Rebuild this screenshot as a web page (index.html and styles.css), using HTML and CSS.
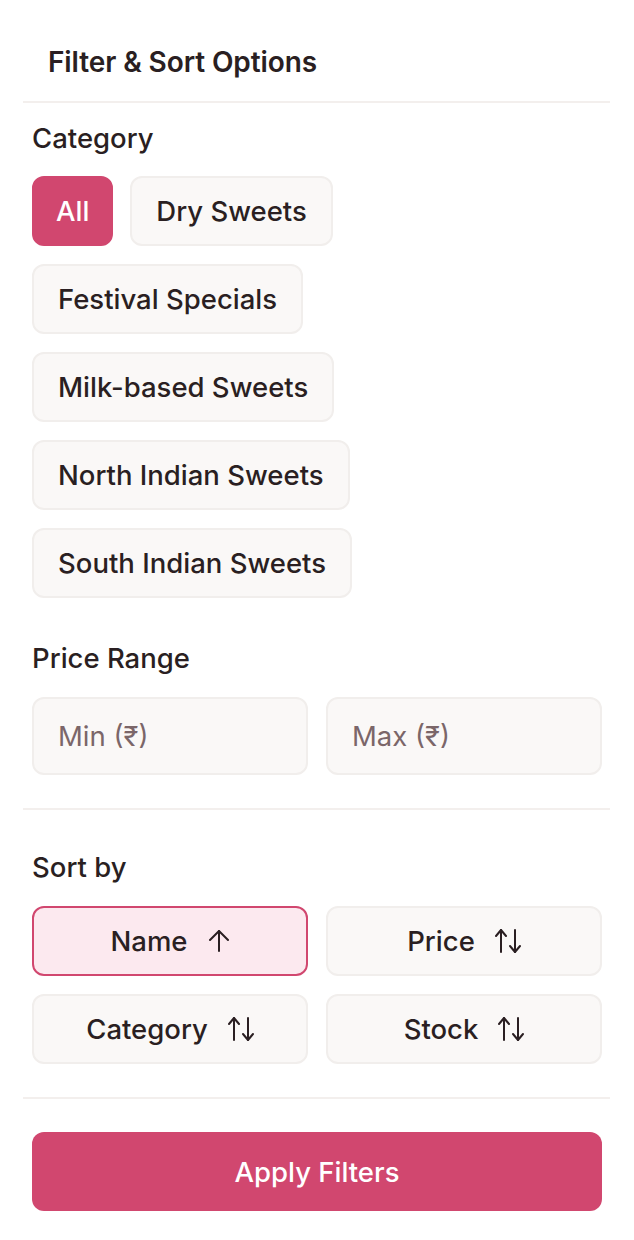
FILE: index.html
```html
<!DOCTYPE html>
<html lang="en">
<head>
<meta charset="utf-8">
<title>Filter &amp; Sort Options</title>
<link rel="stylesheet" href="styles.css">
</head>
<body>
<div class="panel">
  <header class="panel-header">
    <h2 class="panel-title">Filter &amp; Sort Options</h2>
  </header>
  <div class="divider"></div>

  <section class="section section-category">
    <h3 class="label">Category</h3>
    <div class="chips">
      <button class="chip chip-active">All</button>
      <button class="chip">Dry Sweets</button>
      <button class="chip">Festival Specials</button>
      <button class="chip">Milk-based Sweets</button>
      <button class="chip">North Indian Sweets</button>
      <button class="chip">South Indian Sweets</button>
    </div>
  </section>

  <section class="section section-price">
    <h3 class="label">Price Range</h3>
    <div class="grid-2">
      <input class="field" type="text" placeholder="Min (₹)">
      <input class="field" type="text" placeholder="Max (₹)">
    </div>
  </section>
  <div class="divider"></div>

  <section class="section section-sort">
    <h3 class="label">Sort by</h3>
    <div class="grid-2 sort-grid">
      <button class="sort-btn sort-active">Name
        <svg class="ico ico-up" viewBox="0 0 22 22" fill="none" stroke="currentColor" stroke-width="2" stroke-linecap="round" stroke-linejoin="round"><path d="M2 10 11 1l9 9"/><path d="M11 1v20"/></svg>
      </button>
      <button class="sort-btn">Price
        <svg class="ico ico-updown" viewBox="0 0 26 24" fill="none" stroke="currentColor" stroke-width="2" stroke-linecap="round" stroke-linejoin="round"><path d="M1 7 6 1l5 6"/><path d="M6 1v22"/><path d="M15 17l5 6 5-6"/><path d="M20 23V1"/></svg>
      </button>
      <button class="sort-btn">Category
        <svg class="ico ico-updown" viewBox="0 0 26 24" fill="none" stroke="currentColor" stroke-width="2" stroke-linecap="round" stroke-linejoin="round"><path d="M1 7 6 1l5 6"/><path d="M6 1v22"/><path d="M15 17l5 6 5-6"/><path d="M20 23V1"/></svg>
      </button>
      <button class="sort-btn">Stock
        <svg class="ico ico-updown" viewBox="0 0 26 24" fill="none" stroke="currentColor" stroke-width="2" stroke-linecap="round" stroke-linejoin="round"><path d="M1 7 6 1l5 6"/><path d="M6 1v22"/><path d="M15 17l5 6 5-6"/><path d="M20 23V1"/></svg>
      </button>
    </div>
  </section>
  <div class="divider"></div>

  <div class="section section-apply">
    <button class="apply-btn">Apply Filters</button>
  </div>
</div>
</body>
</html>
```

FILE: styles.css
```css
* { box-sizing: border-box; }
html, body {
  margin: 0;
  padding: 0;
  background: #ffffff;
}
body {
  font-family: Inter, "Noto Sans", "Liberation Sans", sans-serif;
  color: #2a1f22;
}
.panel {
  width: 634px;
  height: 1240px;
  padding: 0 24px 0 23px;
  background: #fff;
}
.panel-header {
  height: 101px;
  display: flex;
  align-items: center;
  padding: 0 25px;
}
.panel-title {
  margin: 0;
  font-size: 28px;
  font-weight: 600;
  letter-spacing: -0.1px;
  padding-top: 22px;
}
.divider {
  height: 2px;
  background: #f3efed;
}
.section {
  padding: 0 8px 0 9px;
}
.label {
  margin: 0;
  font-size: 27.5px;
  font-weight: 500;
  line-height: 32px;
}
.section-category { padding-top: 19px; }
.section-category .label { margin-bottom: 22px; }
.chips {
  display: flex;
  flex-wrap: wrap;
  gap: 18px 17px;
  width: 330px;
}
.chip {
  font-family: inherit;
  height: 70px;
  padding: 0 24px;
  border-radius: 12px;
  border: 2px solid #f1eeec;
  background: #faf8f7;
  color: #2a1f22;
  font-size: 27.5px;
  font-weight: 500;
  cursor: pointer;
}
.chip-active {
  background: #d1476f;
  border-color: #d1476f;
  color: #fff;
  padding: 0 22px;
}
.section-price { padding-top: 44px; padding-bottom: 33px; }
.section-price .label { margin-bottom: 23px; }
.grid-2 {
  display: grid;
  grid-template-columns: 1fr 1fr;
  gap: 18px;
}
.field {
  font-family: inherit;
  height: 78px;
  border-radius: 12px;
  border: 2px solid #f1eeec;
  background: #faf8f7;
  padding: 0 24px;
  font-size: 27.5px;
  color: #2a1f22;
  width: 100%;
  outline: none;
}
.field::placeholder { color: #7b6669; }
.section-sort { padding-top: 41px; padding-bottom: 33px; }
.section-sort .label { margin-bottom: 23px; }
.sort-btn {
  font-family: inherit;
  height: 70px;
  border-radius: 12px;
  border: 2px solid #f1eeec;
  background: #faf8f7;
  color: #2a1f22;
  font-size: 27.5px;
  font-weight: 500;
  display: flex;
  align-items: center;
  justify-content: center;
  gap: 20px;
  cursor: pointer;
}
.sort-active {
  background: #fce9ef;
  border-color: #d1476f;
}
.ico { display: block; flex: none; }
.ico-up { width: 22px; height: 22px; }
.ico-updown { width: 26px; height: 24px; }
.section-apply { padding-top: 33px; }
.apply-btn {
  font-family: inherit;
  width: 100%;
  height: 79px;
  border: none;
  border-radius: 12px;
  background: #d1476f;
  color: #fff;
  font-size: 27.5px;
  font-weight: 500;
  cursor: pointer;
}
```
